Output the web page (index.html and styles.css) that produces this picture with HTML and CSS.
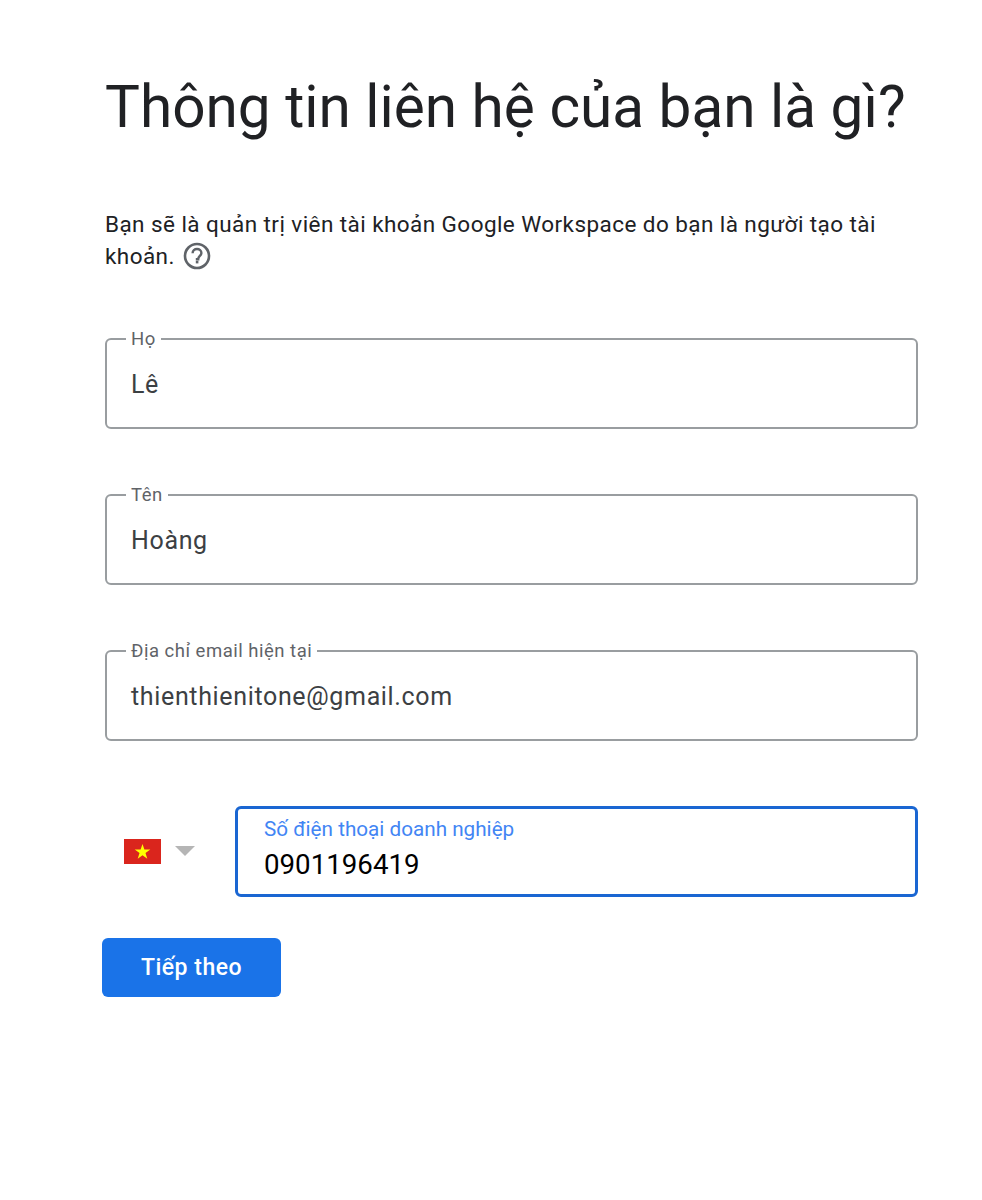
FILE: index.html
```html
<!DOCTYPE html>
<html lang="vi">
<head>
  <meta charset="UTF-8">
  <meta name="viewport" content="width=device-width, initial-scale=1.0">
  <title>Thông tin liên hệ</title>
  <link rel="stylesheet" href="styles.css">
</head>
<body>
  <div class="container">
    <h1>Thông tin liên hệ của bạn là gì?</h1>

    <p class="intro">
      Bạn sẽ là quản trị viên tài khoản Google Workspace do bạn là người tạo tài khoản.
      <svg class="help-icon" viewBox="0 0 28 28" width="28" height="28" aria-hidden="true">
        <circle cx="14" cy="14" r="12" fill="none" stroke="#5f6368" stroke-width="2.6"/>
        <path d="M9.6 11.2c0-2.5 2-4.2 4.4-4.2s4.4 1.7 4.4 3.9c0 3-3.2 3.1-3.2 6.3h-2.4" fill="none" stroke="#5f6368" stroke-width="2.4"/>
        <rect x="12.8" y="18.8" width="2.6" height="2.6" fill="#5f6368"/>
      </svg>
    </p>

    <fieldset class="field">
      <legend>Họ</legend>
      <div class="field-value">Lê</div>
    </fieldset>

    <fieldset class="field">
      <legend>Tên</legend>
      <div class="field-value">Hoàng</div>
    </fieldset>

    <fieldset class="field">
      <legend>Địa chỉ email hiện tại</legend>
      <div class="field-value">thienthienitone@gmail.com</div>
    </fieldset>

    <div class="phone-row">
      <div class="country-select">
        <svg class="flag" viewBox="0 0 37 25" width="37" height="25" aria-hidden="true">
          <rect width="37" height="25" fill="#da251d"/>
          <polygon points="18.5,5 20.4,10.6 26.3,10.6 21.5,14.1 23.3,19.7 18.5,16.2 13.7,19.7 15.5,14.1 10.7,10.6 16.6,10.6" fill="#ffff00"/>
        </svg>
        <span class="caret"></span>
      </div>
      <div class="phone-input">
        <div class="phone-label">Số điện thoại doanh nghiệp</div>
        <div class="phone-value">0901196419</div>
      </div>
    </div>

    <button class="next-btn">Tiếp theo</button>
  </div>
</body>
</html>
```

FILE: styles.css
```css
body {
  margin: 0;
  background: #fff;
  font-family: Roboto, "Liberation Sans", sans-serif;
}
.container {
  width: 813px;
  margin-left: 105px;
  padding-top: 71px;
}
h1 {
  margin: 0;
  font-size: 58.5px;
  line-height: 72px;
  font-weight: 400;
  white-space: nowrap;
  color: #202124;
}
.intro {
  margin: 65px 0 0;
  font-size: 22.5px;
  line-height: 32px;
  letter-spacing: 0.43px;
  color: #202124;
}
.help-icon {
  vertical-align: -6px;
  margin-left: 2px;
}
.field {
  margin: 0 0 56px;
  padding: 0 24px;
  height: 100px;
  box-sizing: border-box;
  border: 2px solid #999da0;
  border-radius: 6px;
}
.intro + .field {
  margin-top: 57px;
}
.field legend {
  margin-left: -5px;
  padding: 0 5px;
  font-size: 18.5px;
  line-height: 20px;
  letter-spacing: 0.5px;
  color: #5f6368;
}
.field-value {
  margin-top: 18px;
  font-size: 25px;
  line-height: 36px;
  letter-spacing: 0.65px;
  color: #3c4043;
}
.phone-row {
  display: flex;
  align-items: stretch;
  height: 91px;
  margin-top: 65px;
}
.country-select {
  width: 130px;
  padding-left: 19px;
  box-sizing: border-box;
  display: flex;
  align-items: center;
  gap: 14px;
}
.caret {
  width: 0;
  height: 0;
  border-left: 10px solid transparent;
  border-right: 10px solid transparent;
  border-top: 10px solid #b5b5b5;
  margin-bottom: 2px;
}
.phone-input {
  flex: 1;
  box-sizing: border-box;
  padding: 8px 26px;
  border: 3px solid #1a66d2;
  border-radius: 6px;
}
.phone-label {
  font-size: 20.7px;
  line-height: 24px;
  color: #4285f4;
}
.phone-value {
  margin-top: 6px;
  font-size: 27.7px;
  line-height: 36px;
  color: #000;
}
.next-btn {
  display: block;
  width: 179px;
  height: 59px;
  margin: 41px 0 0 -3px;
  border: 0;
  border-radius: 6px;
  background: #1a73e8;
  color: #fff;
  font-family: inherit;
  font-size: 23px;
  font-weight: 500;
  letter-spacing: 0.5px;
}
```
